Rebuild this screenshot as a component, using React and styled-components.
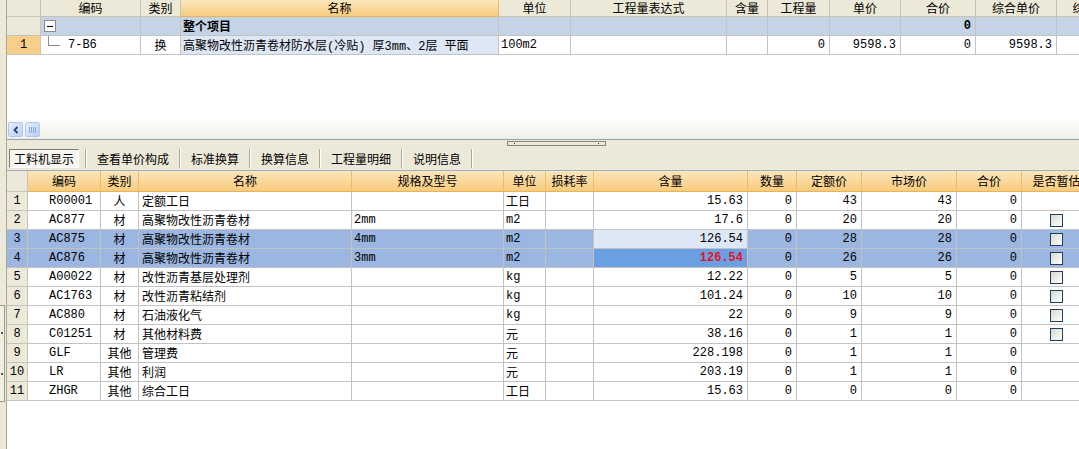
import React from "react";
import styled, { createGlobalStyle, css } from "styled-components";

const GlobalStyle = createGlobalStyle`
  html, body {
    margin: 0;
    padding: 0;
    background: #ffffff;
  }
  body {
    font-family: "Liberation Mono", "Noto Sans CJK SC", monospace;
    font-size: 12px;
    color: #000;
  }
`;

const TOP_COLS = "34px 100px 40px 318px 72px 156px 41px 62px 71px 75px 81px 80px";
const LOW_COLS = "21px 73px 38px 213px 152px 42px 48px 154px 49px 65px 95px 65px 70px";

const Frame = styled.div`
  display: flex;
  width: 1079px;
  height: 449px;
  overflow: hidden;
`;

const LeftStrip = styled.div`
  width: 7px;
  flex: none;
  background: #ece9d8;
  border-right: 1px solid #aca899;
  display: flex;
  flex-direction: column;
  padding-top: 305px;
  box-sizing: border-box;
`;

const SideGrip = styled.div`
  width: 5px;
  height: 97px;
  border: 1px solid #9d9a88;
  border-left: none;
  background: #f1efe4;
  display: flex;
  flex-direction: column;
  justify-content: space-between;
  align-items: center;
  padding: 26px 0;
  box-sizing: border-box;

  &::before,
  &::after {
    content: "";
    width: 2px;
    height: 2px;
    background: #555;
  }
`;

const Main = styled.div`
  flex: 1;
  min-width: 0;
  display: flex;
  flex-direction: column;
  overflow: hidden;
`;

const TopPane = styled.div`
  height: 120px;
  flex: none;
  background: #fff;
  overflow: hidden;
`;

const Row = styled.div`
  display: grid;
  grid-template-columns: ${(p) => p.$cols};
  height: ${(p) => p.$h || 19}px;
  background: ${(p) => p.$bg || "transparent"};
`;

const HeadCell = styled.div`
  box-sizing: border-box;
  display: flex;
  align-items: center;
  justify-content: center;
  white-space: nowrap;
  overflow: hidden;
  border-right: 1px solid #c9c5b2;
  border-bottom: 1px solid #c9c5b2;
  background: #ece9d8;
  ${(p) =>
    p.$orange &&
    css`
      background: linear-gradient(#fbe6bd, #f7cb7c);
      border-right-color: #e9bd6b;
      border-bottom-color: #eab55a;
    `}
`;

const Cell = styled.div`
  box-sizing: border-box;
  display: flex;
  align-items: center;
  justify-content: ${(p) =>
    p.$align === "r" ? "flex-end" : p.$align === "c" ? "center" : "flex-start"};
  padding: 0 ${(p) => (p.$align === "r" ? "4px" : "2px")} 0 ${(p) => p.$pl ?? 2}px;
  white-space: nowrap;
  overflow: hidden;
  border-right: 1px solid #c3c3c3;
  border-bottom: 1px solid #c3c3c3;
  background: ${(p) => p.$bg || "transparent"};
  font-weight: ${(p) => (p.$bold ? "bold" : "normal")};
  color: ${(p) => (p.$red ? "#e8121e" : "#000")};
`;

const NumCell = styled(Cell)`
  justify-content: center;
  padding: 0;
  background: ${(p) => p.$bg || "#ece9d8"};
  border-right-color: #c9c5b2;
`;

const Toggle = styled.span`
  width: 10px;
  height: 10px;
  border: 1px solid #8a8a8a;
  background: #fff;
  display: flex;
  align-items: center;
  justify-content: center;

  &::after {
    content: "";
    width: 6px;
    height: 1px;
    background: #000;
  }
`;

const TreeLine = styled.span`
  align-self: flex-start;
  width: 11px;
  height: 9px;
  margin: 0 8px 0 7px;
  border-left: 1px solid #8c8c8c;
  border-bottom: 1px solid #8c8c8c;
`;

const HScroll = styled.div`
  height: 19px;
  flex: none;
  display: flex;
  align-items: center;
  gap: 2px;
  padding-left: 1px;
  background: linear-gradient(#fdfdfc, #efeee6);
  border-bottom: 1px solid #8fa3bd;
`;

const ScrollBtn = styled.div`
  width: 15px;
  height: 15px;
  box-sizing: border-box;
  border: 1px solid #b4c6ee;
  border-radius: 2px;
  background: linear-gradient(135deg, #e6eefd, #bcd0f6);
  display: flex;
  align-items: center;
  justify-content: center;
`;

const Grip = styled.div`
  width: 7px;
  height: 6px;
  background: repeating-linear-gradient(
    90deg,
    #8ea6d8 0,
    #8ea6d8 1px,
    transparent 1px,
    transparent 2px
  );
`;

const TabArea = styled.div`
  flex: none;
  height: 31px;
  background: #ece9d8;
  display: flex;
  flex-direction: column;
  border-bottom: 1px solid #9fb0c6;
  box-sizing: border-box;
`;

const SplitRow = styled.div`
  height: 7px;
  display: flex;
  justify-content: center;
  padding-left: 26px;
  padding-top: 1px;
  box-sizing: border-box;
`;

const SplitHandle = styled.div`
  width: 99px;
  height: 5px;
  box-sizing: border-box;
  border: 1px solid #8a877a;
  display: flex;
  justify-content: space-between;
  padding: 1px 6px;

  &::before,
  &::after {
    content: "";
    width: 1px;
    height: 1px;
    background: #333;
  }
`;

const TabRow = styled.div`
  flex: 1;
  display: flex;
  align-items: center;
  padding-left: 2px;
`;

const Tab = styled.div`
  height: 19px;
  display: flex;
  align-items: center;
  padding: 0 10px;
  font-family: "Noto Sans CJK SC", sans-serif;
  font-size: 12px;
  ${(p) =>
    p.$active &&
    css`
      box-sizing: border-box;
      padding: 0 4px;
      margin-right: 6px;
      background: #f6f5f0;
      border: 1px solid;
      border-color: #7f7d72 #ffffff #ffffff #7f7d72;
    `}
`;

const TabSep = styled.div`
  width: 0;
  height: 19px;
  border-left: 1px solid #aca899;
  border-right: 1px solid #ffffff;
`;

const LowPane = styled.div`
  flex: 1;
  background: #fff;
  overflow: hidden;
`;

const Check = styled.span`
  width: 11px;
  height: 11px;
  border: 1px solid #20405e;
  background: linear-gradient(135deg, #d8d8d0, #ffffff);
`;

const topHeads = [
  "",
  "编码",
  "类别",
  "名称",
  "单位",
  "工程量表达式",
  "含量",
  "工程量",
  "单价",
  "合价",
  "综合单价",
  "综合合价",
];

const lowHeads = [
  "",
  "编码",
  "类别",
  "名称",
  "规格及型号",
  "单位",
  "损耗率",
  "含量",
  "数量",
  "定额价",
  "市场价",
  "合价",
  "是否暂估",
];

const items = [
  ["R00001", "人", "定额工日", "", "工日", "15.63", "43", "43", false],
  ["AC877", "材", "高聚物改性沥青卷材", "2mm", "m2", "17.6", "20", "20", true],
  ["AC875", "材", "高聚物改性沥青卷材", "4mm", "m2", "126.54", "28", "28", true],
  ["AC876", "材", "高聚物改性沥青卷材", "3mm", "m2", "126.54", "26", "26", true],
  ["A00022", "材", "改性沥青基层处理剂", "", "kg", "12.22", "5", "5", true],
  ["AC1763", "材", "改性沥青粘结剂", "", "kg", "101.24", "10", "10", true],
  ["AC880", "材", "石油液化气", "", "kg", "22", "9", "9", true],
  ["C01251", "材", "其他材料费", "", "元", "38.16", "1", "1", true],
  ["GLF", "其他", "管理费", "", "元", "228.198", "1", "1", false],
  ["LR", "其他", "利润", "", "元", "203.19", "1", "1", false],
  ["ZHGR", "其他", "综合工日", "", "工日", "15.63", "0", "0", false],
];

const SEL = "#9bb6e1";

export default function App() {
  return (
    <>
      <GlobalStyle />
      <Frame>
        <LeftStrip>
          <SideGrip />
        </LeftStrip>
        <Main>
          <TopPane>
            <Row $cols={TOP_COLS} $h={17}>
              {topHeads.map((h, i) => (
                <HeadCell key={i} $orange={i === 3}>
                  {h}
                </HeadCell>
              ))}
            </Row>
            <Row $cols={TOP_COLS} $bg="#c5d3e6">
              <NumCell />
              <Cell $pl={3}>
                <Toggle />
              </Cell>
              <Cell />
              <Cell $bold>整个项目</Cell>
              <Cell />
              <Cell />
              <Cell />
              <Cell />
              <Cell />
              <Cell $align="r" $bold>
                0
              </Cell>
              <Cell />
              <Cell />
            </Row>
            <Row $cols={TOP_COLS}>
              <NumCell $bg="#f8cf88">1</NumCell>
              <Cell $pl={0}>
                <TreeLine />
                7-B6
              </Cell>
              <Cell $align="c">换</Cell>
              <Cell $bg="#dde7f5">高聚物改性沥青卷材防水层(冷贴) 厚3mm、2层 平面</Cell>
              <Cell>100m2</Cell>
              <Cell />
              <Cell />
              <Cell $align="r">0</Cell>
              <Cell $align="r">9598.3</Cell>
              <Cell $align="r">0</Cell>
              <Cell $align="r">9598.3</Cell>
              <Cell />
            </Row>
          </TopPane>
          <HScroll>
            <ScrollBtn>
              <svg width="8" height="8" viewBox="0 0 8 8">
                <path d="M5.5 1 L2.5 4 L5.5 7" fill="none" stroke="#25407a" strokeWidth="1.8" />
              </svg>
            </ScrollBtn>
            <ScrollBtn>
              <Grip />
            </ScrollBtn>
          </HScroll>
          <TabArea>
            <SplitRow>
              <SplitHandle />
            </SplitRow>
            <TabRow>
              <Tab $active>工料机显示</Tab>
              <TabSep />
              <Tab>查看单价构成</Tab>
              <TabSep />
              <Tab>标准换算</Tab>
              <TabSep />
              <Tab>换算信息</Tab>
              <TabSep />
              <Tab>工程量明细</Tab>
              <TabSep />
              <Tab>说明信息</Tab>
              <TabSep />
            </TabRow>
          </TabArea>
          <LowPane>
            <Row $cols={LOW_COLS} $h={21}>
              {lowHeads.map((h, i) => (
                <HeadCell key={i} $orange={i > 0}>
                  {h}
                </HeadCell>
              ))}
            </Row>
            {items.map((it, i) => {
              const sel = i === 2 || i === 3;
              const qtyBg = i === 2 ? "#dde7f5" : i === 3 ? "#6a9fe2" : undefined;
              return (
                <Row key={i} $cols={LOW_COLS} $bg={sel ? SEL : "#fff"}>
                  <NumCell $bg={sel ? SEL : undefined}>{i + 1}</NumCell>
                  <Cell $pl={21}>{it[0]}</Cell>
                  <Cell $align="c">{it[1]}</Cell>
                  <Cell $pl={3}>{it[2]}</Cell>
                  <Cell>{it[3]}</Cell>
                  <Cell>{it[4]}</Cell>
                  <Cell />
                  <Cell $align="r" $bg={qtyBg} $bold={i === 3} $red={i === 3}>
                    {it[5]}
                  </Cell>
                  <Cell $align="r">0</Cell>
                  <Cell $align="r">{it[6]}</Cell>
                  <Cell $align="r">{it[7]}</Cell>
                  <Cell $align="r">0</Cell>
                  <Cell $align="c">{it[8] && <Check />}</Cell>
                </Row>
              );
            })}
          </LowPane>
        </Main>
      </Frame>
    </>
  );
}
